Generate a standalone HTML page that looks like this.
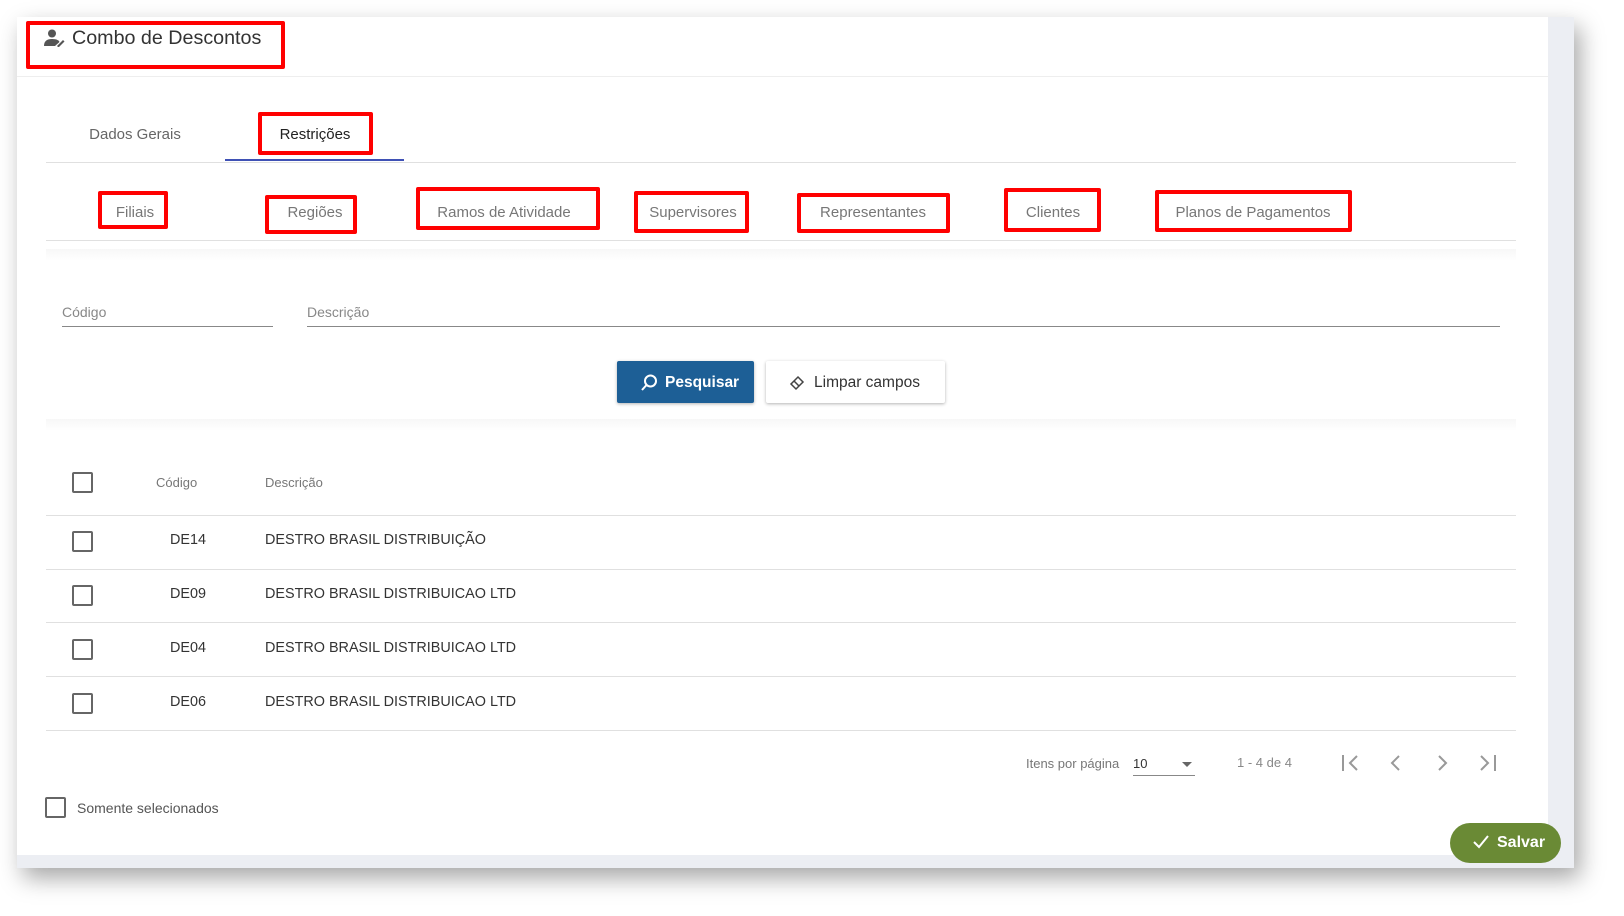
<!DOCTYPE html>
<html><head><meta charset="utf-8"><style>
*{box-sizing:border-box;margin:0;padding:0}
body{width:1624px;height:916px;background:#fff;position:relative;overflow:hidden;font-family:"Liberation Sans",sans-serif;color:#333}
.abs{position:absolute}
.card{left:17px;top:17px;width:1557px;height:851px;background:#eceef3;box-shadow:6px 10px 22px rgba(0,0,0,.35)}
.inner{left:17px;top:17px;width:1531px;height:838px;background:#fff}
.red{position:absolute;border:4px solid #f00;border-radius:2px}
.t{position:absolute;white-space:nowrap}
.hl{position:absolute;height:1px;background:#e0e0e0}
.cb{position:absolute;width:21px;height:21px;border:2px solid #666;border-radius:2px}
.sub{font-size:15px;color:#777;transform:translateX(-50%)}
.r{font-size:14.4px}
</style></head><body>
<div class="abs card"></div>
<div class="abs inner"></div>
<div class="hl" style="left:17px;top:76px;width:1531px;background:#eee"></div>
<svg class="abs" style="left:44px;top:29px" width="22" height="18" viewBox="0 0 22 18"><circle cx="8" cy="4.5" r="4" fill="#555"/><path d="M0 17c0-5 3-7 8-7s7 1.5 7.5 3L11 17z" fill="#555"/><path d="M13 17l6-6 1.5 1.5-6 6z" fill="#555"/></svg>
<div class="t" style="left:72px;top:27px;font-size:19.7px;color:#333">Combo de Descontos</div>
<div class="red" style="left:26px;top:21px;width:259px;height:48px"></div>

<div class="t" style="left:135px;top:126px;font-size:15px;color:#666;transform:translateX(-50%)">Dados Gerais</div>
<div class="t" style="left:315px;top:126px;font-size:15px;color:#222;transform:translateX(-50%)">Restrições</div>
<div class="red" style="left:258px;top:112px;width:115px;height:43px"></div>
<div class="hl" style="left:46px;top:162px;width:1470px"></div>
<div class="abs" style="left:225px;top:159px;width:179px;height:2px;background:#3f51b5"></div>

<div class="t sub" style="left:135px;top:204px">Filiais</div>
<div class="red" style="left:98px;top:191px;width:70px;height:38px"></div>
<div class="t sub" style="left:315px;top:204px">Regiões</div>
<div class="red" style="left:265px;top:195px;width:92px;height:39px"></div>
<div class="t sub" style="left:504px;top:204px">Ramos de Atividade</div>
<div class="red" style="left:416px;top:187px;width:184px;height:43px"></div>
<div class="t sub" style="left:693px;top:204px">Supervisores</div>
<div class="red" style="left:634px;top:191px;width:115px;height:42px"></div>
<div class="t sub" style="left:873px;top:204px">Representantes</div>
<div class="red" style="left:797px;top:193px;width:153px;height:40px"></div>
<div class="t sub" style="left:1053px;top:204px">Clientes</div>
<div class="red" style="left:1004px;top:188px;width:97px;height:44px"></div>
<div class="t sub" style="left:1253px;top:204px">Planos de Pagamentos</div>
<div class="red" style="left:1155px;top:190px;width:197px;height:42px"></div>
<div class="hl" style="left:46px;top:240px;width:1470px"></div>
<div class="abs" style="left:46px;top:249px;width:1470px;height:12px;background:linear-gradient(#f7f7f7,#fff)"></div>

<div class="t" style="left:62px;top:304px;font-size:14px;color:#888">Código</div>
<div class="abs" style="left:62px;top:326px;width:211px;height:1px;background:#888"></div>
<div class="t" style="left:307px;top:304px;font-size:14px;color:#888">Descrição</div>
<div class="abs" style="left:307px;top:326px;width:1193px;height:1px;background:#888"></div>

<div class="abs" style="left:617px;top:361px;width:137px;height:42px;background:#1d5f96;border-radius:2px;box-shadow:0 1px 3px rgba(0,0,0,.3)"></div>
<svg class="abs" style="left:640px;top:374px" width="18" height="18" viewBox="0 0 18 18"><circle cx="10.5" cy="7" r="5.5" fill="none" stroke="#fff" stroke-width="2"/><path d="M6.5 11L2 16" stroke="#fff" stroke-width="2"/></svg>
<div class="t" style="left:665px;top:374px;font-size:15.5px;color:#fff;font-weight:bold">Pesquisar</div>
<div class="abs" style="left:766px;top:361px;width:179px;height:42px;background:#fff;border-radius:2px;box-shadow:0 1px 3px rgba(0,0,0,.3)"></div>
<svg class="abs" style="left:789px;top:375px" width="16" height="16" viewBox="0 0 16 16"><path d="M9 2l5 5-7 7-5-5z M5 6l5 5" fill="none" stroke="#444" stroke-width="1.5"/></svg>
<div class="t" style="left:814px;top:374px;font-size:15.5px;color:#333">Limpar campos</div>
<div class="abs" style="left:46px;top:419px;width:1470px;height:12px;background:linear-gradient(#f7f7f7,#fff)"></div>

<div class="cb" style="left:72px;top:472px"></div>
<div class="t" style="left:156px;top:475px;font-size:13px;color:#777">Código</div>
<div class="t" style="left:265px;top:475px;font-size:13px;color:#777">Descrição</div>
<div class="hl" style="left:46px;top:515px;width:1470px"></div>
<div class="cb" style="left:72px;top:531px"></div>
<div class="t r" style="left:188px;top:532px;transform:translateX(-50%)">DE14</div>
<div class="t r" style="left:265px;top:532px">DESTRO BRASIL DISTRIBUIÇÃO</div>
<div class="hl" style="left:46px;top:569px;width:1470px"></div>
<div class="cb" style="left:72px;top:585px"></div>
<div class="t r" style="left:188px;top:586px;transform:translateX(-50%)">DE09</div>
<div class="t r" style="left:265px;top:586px">DESTRO BRASIL DISTRIBUICAO LTD</div>
<div class="hl" style="left:46px;top:622px;width:1470px"></div>
<div class="cb" style="left:72px;top:639px"></div>
<div class="t r" style="left:188px;top:640px;transform:translateX(-50%)">DE04</div>
<div class="t r" style="left:265px;top:640px">DESTRO BRASIL DISTRIBUICAO LTD</div>
<div class="hl" style="left:46px;top:676px;width:1470px"></div>
<div class="cb" style="left:72px;top:693px"></div>
<div class="t r" style="left:188px;top:694px;transform:translateX(-50%)">DE06</div>
<div class="t r" style="left:265px;top:694px">DESTRO BRASIL DISTRIBUICAO LTD</div>
<div class="hl" style="left:46px;top:730px;width:1470px"></div>

<div class="t" style="left:1026px;top:756px;font-size:13px;color:#777">Itens por página</div>
<div class="t" style="left:1133px;top:756px;font-size:13px;color:#333">10</div>
<div class="abs" style="left:1182px;top:762px;width:0;height:0;border-left:5px solid transparent;border-right:5px solid transparent;border-top:5px solid #666"></div>
<div class="abs" style="left:1133px;top:775px;width:62px;height:1px;background:#888"></div>
<div class="t" style="left:1237px;top:755px;font-size:13px;color:#888">1 - 4 de 4</div>
<svg class="abs" style="left:1340px;top:753px" width="160" height="20" viewBox="0 0 160 20"><g fill="none" stroke="#999" stroke-width="2"><path d="M3 2v16M17 3l-7 7 7 7"/><path d="M59 3l-7 7 7 7"/><path d="M99 3l7 7-7 7"/><path d="M141 3l7 7-7 7M155 2v16"/></g></svg>

<div class="cb" style="left:45px;top:797px"></div>
<div class="t" style="left:77px;top:800px;font-size:14px;color:#555">Somente selecionados</div>

<div class="abs" style="left:1450px;top:823px;width:111px;height:40px;background:#6a8a35;border-radius:20px"></div>
<svg class="abs" style="left:1472px;top:834px" width="18" height="16" viewBox="0 0 18 16"><path d="M2 8l5 5L16 2" fill="none" stroke="#fff" stroke-width="2"/></svg>
<div class="t" style="left:1497px;top:834px;font-size:16px;color:#fff;font-weight:bold">Salvar</div>
</body></html>
